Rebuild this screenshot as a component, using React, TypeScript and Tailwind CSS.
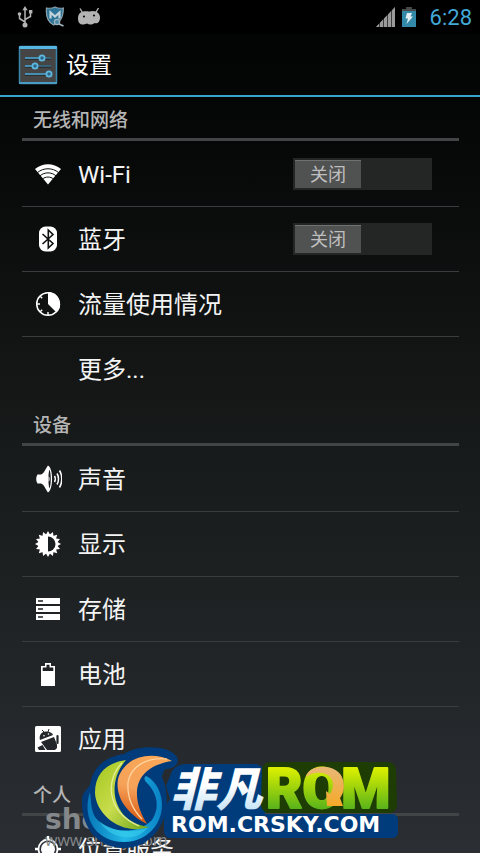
import React from 'react';

const UsbIcon = () => (
  <svg viewBox="0 0 16 22" className="w-4 h-[22px]" fill="none" stroke="#b4b4b4" strokeWidth="1.5">
    <path d="M8 18V3M8 16L2.5 12.5V8M8 13.5L13.5 10.5V6" />
    <path d="M8 0l2.6 4.2H5.4z" fill="#b4b4b4" stroke="none" />
    <circle cx="8" cy="19" r="2.5" fill="#b4b4b4" stroke="none" />
    <circle cx="2.5" cy="8" r="1.8" fill="#b4b4b4" stroke="none" />
    <rect x="12" y="4" width="3.4" height="3.4" fill="#b4b4b4" stroke="none" />
  </svg>
);

const ShieldIcon = () => (
  <svg viewBox="0 0 20 22" className="w-5 h-[22px]">
    <path d="M10 1C7 2.600 4 2.400 1.500 2C.8 9 1.500 15.500 8.500 19C14 17.500 18.500 12 18.300 2C15.500 2.500 12.500 2.300 10 1z" fill="#2c7398" stroke="#8fa3ad" strokeWidth="1.200" />
    <path d="M5.500 12.500V6.500l4.500 4L14.500 6.500v6" fill="none" stroke="#c3d3da" strokeWidth="2.200" />
    <circle cx="12" cy="16" r="2.600" fill="#4688a8" stroke="#9fb1ba" strokeWidth="1.300" />
    <path d="M14 18l4.500 2" stroke="#9fb1ba" strokeWidth="1.800" />
  </svg>
);

const AndroidHeadIcon = () => (
  <svg viewBox="0 0 24 18" className="w-6 h-[18px]" fill="#b4b4b4">
    <path d="M3 .5l3 5M21.500 0l-3 5" stroke="#b4b4b4" strokeWidth="1.400" />
    <path d="M1 10.500C1 4.500 5 2.500 12 3.500C19 1.500 23 5 23 9.500C23 14.500 20 16 17.500 15C15 17 12 17 10 15.500C5 18 1 16 1 10.500z" />
    <circle cx="7" cy="8.500" r="1.100" fill="#111" />
    <circle cx="17" cy="7.500" r="1.100" fill="#111" />
  </svg>
);

const SignalIcon = () => (
  <svg viewBox="0 0 20 22" className="w-5 h-[22px]" fill="#9c9c9c">
    <path d="M0 21l3-3.200V21zM4 16.800l3-3.200V21H4zM8 12.600l3-3.200V21H8zM12 8.400l3-3.200V21h-3zM16 4.200L19 1v20h-3z" />
    <path d="M0 21L19 1v20z" opacity=".4" />
  </svg>
);

const ChargingIcon = () => (
  <svg viewBox="0 0 14 22" className="w-[14px] h-[22px]">
    <path d="M4.500 1h5v2H14v18H0V3h4.500z" fill="#3389a8" />
    <path d="M4.500 1h5v2H14v2H0V3h4.500z" fill="#4a4a4a" />
    <path d="M5 7h5L8.500 10.500H11L4.500 18L6 12.500H3.500z" fill="#e4eef2" />
  </svg>
);

const SettingsIcon = () => (
  <svg viewBox="0 0 40 40" className="w-10 h-10">
    <rect x="1.500" y="1.500" width="37" height="37" rx="1" fill="#454545" stroke="#3a86ab" strokeWidth="1.500" />
    <rect x="1" y="1" width="38" height="3" rx="1" fill="#55b6e2" />
    <rect x="1" y="37" width="38" height="2" fill="#4b9cc4" />
    <path d="M7 14h26M7 22h26M7 30h26" stroke="#29292a" strokeWidth="1.500" />
    <path d="M7 13h26M7 21h26M7 29h26" stroke="#356f8b" strokeWidth="1.500" />
    <path d="M7 13h17M7 21h10M7 29h24" stroke="#4a9ec6" strokeWidth="1.500" />
    <g fill="#2b6482" stroke="#5fb7e0" strokeWidth="1.800">
      <circle cx="24" cy="13" r="2.600" />
      <circle cx="17" cy="21" r="2.600" />
      <circle cx="31" cy="29" r="2.600" />
    </g>
  </svg>
);

const WifiIcon = () => (
  <svg viewBox="0 0 28 28" className="w-7 h-7">
    <path d="M1 9C8.500 2.500 19.500 2.500 27 9L14 24.500z" fill="#fff" />
    <g fill="none" stroke="#0a0c0c" strokeWidth="1">
      <path d="M3.500 12.500C9.500 7.500 18.500 7.500 24.500 12.500" />
      <path d="M6 15.800C10.500 11.900 17.500 11.900 22 15.800" />
      <path d="M8.500 19C11.500 16.400 16.500 16.400 19.500 19" />
    </g>
  </svg>
);

const BluetoothIcon = () => (
  <svg viewBox="0 0 28 28" className="w-7 h-7">
    <rect x="5" y="1.500" width="18" height="25" rx="6.500" fill="#fff" />
    <path d="M8.500 9l10.500 9.500L14.300 23V5L19 9.500L8.500 19" fill="none" stroke="#0e1110" strokeWidth="1.600" />
  </svg>
);

const DataUsageIcon = () => (
  <svg viewBox="0 0 28 28" className="w-7 h-7">
    <circle cx="14" cy="14" r="11.300" fill="none" stroke="#fff" strokeWidth="1.500" />
    <path d="M14 14V2a12 12 0 0 1 8.500 20.500z" fill="#fff" />
    <path d="M3 14h3M14 22v3M6.200 6.200l2 2M6.200 21.800l2-2" stroke="#fff" strokeWidth="1.400" />
  </svg>
);

const SoundIcon = () => (
  <svg viewBox="0 0 28 28" className="w-7 h-7" fill="#fff">
    <path d="M3.500 9.500H7C10 8.500 11.500 4 14 .5C19.500 3 19.500 25 14 27.500C11.500 24 10 19.500 7 18.500H3.500C1.800 16 1.800 12 3.500 9.500z" />
    <path d="M15.500 4.500C17.200 8 17.200 20 15.500 23.500C14 20 14 8 15.500 4.500z" fill="#1a1d1d" />
    <path d="M14.500 11C16 12.500 16 15.500 14.500 17z" />
    <g fill="none" stroke="#fff" strokeWidth="1.500">
      <path d="M20.500 11C21.500 12.500 21.500 15.500 20.500 17" />
      <path d="M23 8.500C25 11.500 25 16.500 23 19.500" />
      <path d="M25.500 5.500C28.500 10 28.500 18 25.500 22.500" />
    </g>
  </svg>
);

const DisplayIcon = () => (
  <svg viewBox="0 0 28 28" className="w-7 h-7">
    {Array.from({ length: 16 }).map((_, i) => (
      <path key={i} d="M11.800 5L14 1l2.200 4z" fill="#fff" transform={`rotate(${i * 22.5} 14 14)`} />
    ))}
    <circle cx="14" cy="14" r="10" fill="#fff" />
    <path d="M14 6.500a7.500 7.500 0 0 1 0 15z" fill="#1b1e21" />
  </svg>
);

const StorageIcon = () => (
  <svg viewBox="0 0 28 28" className="w-7 h-7">
    <path d="M2 3h24v6H2zM2 11h24v6H2zM2 19h24v6H2z" fill="#fff" />
    <path d="M4 6h5M4 14h5M4 22h5" stroke="#1d2023" strokeWidth="1.500" />
  </svg>
);

const BatteryIcon = () => (
  <svg viewBox="0 0 28 28" className="w-7 h-7">
    <path d="M11 3h6v3h4v20H7V6h4z" fill="#fff" />
    <path d="M12.500 4.800h3v2.700h3.800v3.500H8.700V7.500h3.800z" fill="#1f2326" />
  </svg>
);

const AppsIcon = () => (
  <svg viewBox="0 0 28 28" className="w-7 h-7">
    <rect x="1" y="1" width="26" height="26" rx="1.500" fill="#fff" />
    <g fill="#23272b">
      <path d="M6 15C4.500 9.500 8.500 6 13 6.500C16.500 6.800 18.500 8.500 19 10z" />
      <path d="M7 17L20 12L23 19.500V23L21 25H13z" />
      <path d="M3.500 22.500l5-2.500l3 5H5z" />
      <path d="M8 5l2.500 2.500M15 4l-1 3" stroke="#23272b" strokeWidth="1" />
      <path d="M23.500 11v7" stroke="#23272b" strokeWidth="2.200" strokeLinecap="round" />
    </g>
    <circle cx="10" cy="10.800" r=".8" fill="#fff" />
    <circle cx="14.500" cy="9" r=".8" fill="#fff" />
  </svg>
);

const LocationIcon = () => (
  <svg viewBox="0 0 28 28" className="w-7 h-7">
    <circle cx="14" cy="14" r="9.500" fill="none" stroke="#fff" strokeWidth="1.800" />
    <circle cx="14" cy="14" r="7" fill="#fff" />
    <path d="M14 1v4M14 23v4M1 14h4M23 14h4" stroke="#fff" strokeWidth="2.500" />
  </svg>
);

type Item = { label: string; icon?: React.FC; toggle?: boolean };

const sections: { title: string; items: Item[] }[] = [
  {
    title: '无线和网络',
    items: [
      { label: 'Wi-Fi', icon: WifiIcon, toggle: true },
      { label: '蓝牙', icon: BluetoothIcon, toggle: true },
      { label: '流量使用情况', icon: DataUsageIcon },
      { label: '更多...' },
    ],
  },
  {
    title: '设备',
    items: [
      { label: '声音', icon: SoundIcon },
      { label: '显示', icon: DisplayIcon },
      { label: '存储', icon: StorageIcon },
      { label: '电池', icon: BatteryIcon },
      { label: '应用', icon: AppsIcon },
    ],
  },
  {
    title: '个人',
    items: [{ label: '位置服务', icon: LocationIcon }],
  },
];

const Row = ({ item }: { item: Item }) => {
  const Icon = item.icon;
  return (
    <li className="flex items-center h-[65px] pl-3 pr-[27px] border-b border-[#3a3d3e] last:border-transparent">
      <button type="button" className="flex flex-1 items-center gap-4 text-left text-2xl text-[#f4f4f4]">
        <span className="flex w-7 h-7 shrink-0">{Icon && <Icon />}</span>
        <span className="pt-0.5">{item.label}</span>
      </button>
      {item.toggle && (
        <button type="button" role="switch" aria-checked="false" aria-label={item.label} className="flex w-[139px] h-8 p-0.5 bg-[#242525]">
          <span className="flex w-[66px] h-7 items-center justify-center border-t border-[#707272] bg-[#505151] text-lg text-[#bfbfbf]">
            关闭
          </span>
        </button>
      )}
    </li>
  );
};

const RomLogo = () => (
  <svg viewBox="80 745 320 108" className="absolute left-20 top-[745px] w-80 h-[108px]">
    <defs>
      <linearGradient id="lime" x1="0" y1="0" x2="0" y2="1">
        <stop offset=".2" stopColor="#d9ee00" />
        <stop offset=".85" stopColor="#4fae1d" />
      </linearGradient>
      <linearGradient id="leaf" x1="0" y1="0" x2="1" y2="1">
        <stop offset="0" stopColor="#a3c61c" />
        <stop offset=".5" stopColor="#c8dc4c" />
        <stop offset="1" stopColor="#6da51c" />
      </linearGradient>
      <linearGradient id="flame" x1=".6" y1="0" x2=".4" y2="1">
        <stop offset="0" stopColor="#f9a658" />
        <stop offset=".5" stopColor="#f6a35a" />
        <stop offset="1" stopColor="#d9540f" />
      </linearGradient>
      <linearGradient id="sea" x1="0" y1="0" x2="1" y2="0">
        <stop offset="0" stopColor="#0878b8" />
        <stop offset=".5" stopColor="#22b8e6" />
        <stop offset="1" stopColor="#0a83c6" />
      </linearGradient>
      <linearGradient id="ice" x1="0" y1="0" x2="0" y2="1">
        <stop offset=".4" stopColor="#ffffff" />
        <stop offset="1" stopColor="#b8dcf4" />
      </linearGradient>
      <linearGradient id="gold" x1="0" y1="0" x2="0" y2="1">
        <stop offset="0" stopColor="#e8b878" />
        <stop offset="1" stopColor="#f5a928" />
      </linearGradient>
    </defs>

    {/* Swirl */}
    <path d="M82 801C82 792 87 790 90 785C93 766 107 756 124 754C137 745 168 744 177 757C180 765 173 769 165 769C164 772 162 774 162 777C176 808 159 848 124 848C97 848 81 826 82 801z" fill="#003c7c" />
    <path d="M90 792C81 819 97 842 124 842C151 842 168 817 160 793C157 784 151 778 146 776C144 777 144 780 146 782C158 793 160 808 152 820C137 836 106 833 95 817C91 810 91 801 90 792z" fill="url(#sea)" />
    <path d="M99 821C111 831 133 835 148 827C137 843 111 840 99 821z" fill="#3bd0ee" opacity=".6" />
    <path d="M126 760C106 763 95 774 95 793C96 815 122 836 149 827C113 823 105 784 126 760z" fill="url(#leaf)" />
    <path d="M122 763C106 779 105 811 139 826" fill="none" stroke="#e6ef9d" strokeWidth="1.200" />
    <path d="M172 761C151 750 124 757 118 779C115 797 127 814 147 824C132 800 129 768 172 761z" fill="url(#flame)" />
    <path d="M167 759C145 757 131 767 128 782C127 797 133 810 142 819" fill="none" stroke="#ffd6a4" strokeWidth="1.200" />

    {/* Name plate */}
    <path d="M186 764H253Q265 764 265 776V818H164Q164 805 170 799L166 786L172 771Q177 764 186 764z" fill="#003c7c" />
    <path d="M170 820H392V832H170z" fill="#003c7c" stroke="#003c7c" strokeWidth="12" strokeLinejoin="round" />
    <path d="M270 770H388L389 805H269z" fill="#1d3d05" stroke="#1d3d05" strokeWidth="16" strokeLinejoin="round" />
    <path d="M262 820H392V832H262z" fill="#003c7c" stroke="#003c7c" strokeWidth="12" strokeLinejoin="round" />
    <text x="170" y="806" fontSize="46" className="font-black italic" fill="url(#ice)">非凡</text>
    <text x="266" y="808" fontSize="56" className="font-[Roboto] font-black" fill="url(#lime)" stroke="url(#lime)" strokeWidth="2" strokeLinejoin="round">ROM</text>
    <path d="M306 777C309 763 339 763 343 780C345 789 343 794 340 798L343 806L327 806L326 791L330 794C334 788 334 780 329 776C323 771 313 772 306 777z" fill="url(#gold)" />
    <text x="171" y="832" fontSize="22" className="font-['DejaVu_Sans'] font-bold" fill="#fff">ROM.CRSKY.COM</text>
  </svg>
);

export default function App() {
  return (
    <div className="relative h-screen overflow-hidden bg-linear-to-b from-[#020303] via-[#141716] via-45% to-[#2b2f34] font-[Roboto,'Noto_Sans_CJK_SC',sans-serif] text-white">
      <div className="flex h-[34px] items-center justify-between bg-black pl-[17px] pr-2">
        <div className="flex items-center gap-3">
          <UsbIcon />
          <ShieldIcon />
          <AndroidHeadIcon />
        </div>
        <div className="flex items-center">
          <SignalIcon />
          <span className="ml-1.5 flex"><ChargingIcon /></span>
          <span className="ml-[14px] pt-0.5 text-[22px] leading-none text-[#42a9d6]">6:28</span>
        </div>
      </div>

      <header className="flex h-[63px] items-center gap-2 border-b-2 border-[#35a5cf] pl-[18px]">
        <SettingsIcon />
        <h1 className="pt-1 text-[23px]">设置</h1>
      </header>

      <main className="pl-[22px] pr-[21px]">
        {sections.map((section) => (
          <section key={section.title}>
            <h2 className="flex h-11 items-center border-b-3 border-[#424545] pl-[11px] pt-2 text-[19px] font-medium text-[#b4b4b4]">
              {section.title}
            </h2>
            <ul className="pt-px">
              {section.items.map((item) => (
                <Row key={item.label} item={item} />
              ))}
            </ul>
          </section>
        ))}
      </main>

      {/* Watermark */}
      <div className="absolute left-[45px] top-[806px] font-['DejaVu_Sans'] text-[#85888a]">
        <p className="text-[28px] leading-7 font-bold">shouji</p>
        <p className="font-['Open_Sans'] text-base leading-3">www.shouji.com</p>
      </div>
      <RomLogo />
    </div>
  );
}
